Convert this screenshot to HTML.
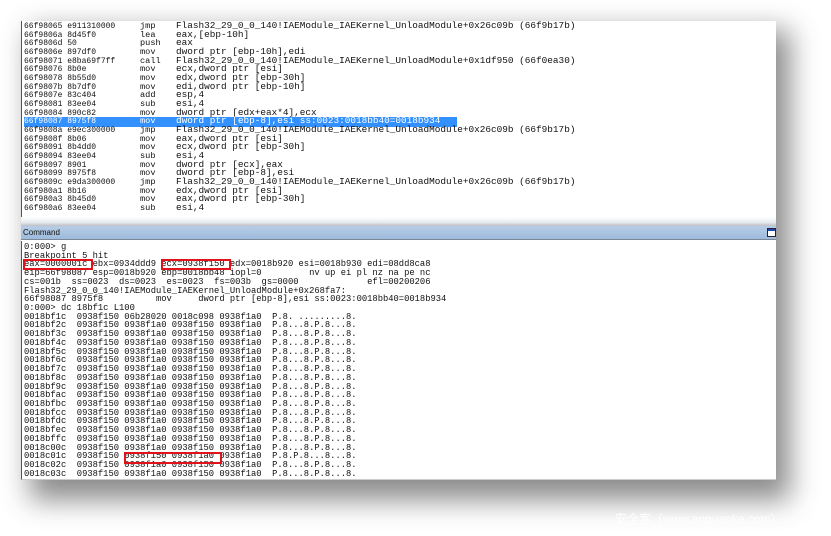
<!DOCTYPE html>
<html><head><meta charset="utf-8"><style>
html,body{margin:0;padding:0;width:831px;height:536px;overflow:hidden;background:#fff;position:relative}
.shadow{position:absolute;left:30px;top:30px;width:760px;height:470px;background:#777;filter:blur(14px);opacity:.85}
.panel{position:absolute;left:21px;top:21px;width:755px;height:459px;background:#fff}
pre{margin:0;font-family:"Liberation Mono",monospace;font-size:8.8px;color:#111;white-space:pre}
.top{position:absolute;left:0;top:0;width:755px;height:196px;border-left:1px solid #555;box-sizing:border-box;padding:1px 0 0 2px}
.r{height:8.68px;line-height:8.68px;font-family:"Liberation Mono",monospace;font-size:8.6px;color:#111;white-space:pre}
.r span{display:inline-block}
.a{width:116px;font-size:8px}
.m{width:36px}
.o{font-size:9.4px;letter-spacing:0}
.hl{background:#3390ff;color:#fff;width:433px}
.sep{position:absolute;left:0;top:196px;width:755px;height:9px;background:linear-gradient(#fff,#e6ebf0 60%,#bdbdc4)}
.bar{position:absolute;left:0;top:205px;width:755px;height:14px;background:linear-gradient(#b7cde6,#9ebbdc);border-bottom:1px solid #7a8898;font:8px "Liberation Sans",sans-serif;color:#111;line-height:14px;padding-left:2px;box-sizing:border-box}
.ico{position:absolute;right:0;top:2px;width:9px;height:9px;border:1px solid #223;background:#fff;box-sizing:border-box}
.ico:before{content:"";position:absolute;left:0;top:0;width:100%;height:2px;background:#2244aa}
.cmd{position:absolute;left:0;top:220px;width:755px;height:239px;border-left:1px solid #555;border-bottom:1px solid #ccc;box-sizing:border-box;padding:2px 0 0 2px;overflow:hidden}
.cmd pre{line-height:8.72px}
.rb{position:absolute;border:2px solid #e0131a;box-sizing:border-box}
.wm{position:absolute;left:615px;top:510px;font:12px "Liberation Sans","Noto Sans CJK SC",sans-serif;color:#fff;opacity:.9}
</style></head><body>
<div class="shadow"></div>
<div class="panel">
<div class="top">
<div class="r"><span class="a">66f98065 e911310000</span><span class="m">jmp</span><span class="o">Flash32_29_0_0_140!IAEModule_IAEKernel_UnloadModule+0x26c09b (66f9b17b)</span></div>
<div class="r"><span class="a">66f9806a 8d45f0</span><span class="m">lea</span><span class="o">eax,[ebp-10h]</span></div>
<div class="r"><span class="a">66f9806d 50</span><span class="m">push</span><span class="o">eax</span></div>
<div class="r"><span class="a">66f9806e 897df0</span><span class="m">mov</span><span class="o">dword ptr [ebp-10h],edi</span></div>
<div class="r"><span class="a">66f98071 e8ba69f7ff</span><span class="m">call</span><span class="o">Flash32_29_0_0_140!IAEModule_IAEKernel_UnloadModule+0x1df950 (66f0ea30)</span></div>
<div class="r"><span class="a">66f98076 8b0e</span><span class="m">mov</span><span class="o">ecx,dword ptr [esi]</span></div>
<div class="r"><span class="a">66f98078 8b55d0</span><span class="m">mov</span><span class="o">edx,dword ptr [ebp-30h]</span></div>
<div class="r"><span class="a">66f9807b 8b7df0</span><span class="m">mov</span><span class="o">edi,dword ptr [ebp-10h]</span></div>
<div class="r"><span class="a">66f9807e 83c404</span><span class="m">add</span><span class="o">esp,4</span></div>
<div class="r"><span class="a">66f98081 83ee04</span><span class="m">sub</span><span class="o">esi,4</span></div>
<div class="r"><span class="a">66f98084 890c82</span><span class="m">mov</span><span class="o">dword ptr [edx+eax*4],ecx</span></div>
<div class="r"><span class="hl"><span class="a">66f98087 8975f8</span><span class="m">mov</span><span class="o">dword ptr [ebp-8],esi ss:0023:0018bb40=0018b934</span></span></div>
<div class="r"><span class="a">66f9808a e9ec300000</span><span class="m">jmp</span><span class="o">Flash32_29_0_0_140!IAEModule_IAEKernel_UnloadModule+0x26c09b (66f9b17b)</span></div>
<div class="r"><span class="a">66f9808f 8b06</span><span class="m">mov</span><span class="o">eax,dword ptr [esi]</span></div>
<div class="r"><span class="a">66f98091 8b4dd0</span><span class="m">mov</span><span class="o">ecx,dword ptr [ebp-30h]</span></div>
<div class="r"><span class="a">66f98094 83ee04</span><span class="m">sub</span><span class="o">esi,4</span></div>
<div class="r"><span class="a">66f98097 8901</span><span class="m">mov</span><span class="o">dword ptr [ecx],eax</span></div>
<div class="r"><span class="a">66f98099 8975f8</span><span class="m">mov</span><span class="o">dword ptr [ebp-8],esi</span></div>
<div class="r"><span class="a">66f9809c e9da300000</span><span class="m">jmp</span><span class="o">Flash32_29_0_0_140!IAEModule_IAEKernel_UnloadModule+0x26c09b (66f9b17b)</span></div>
<div class="r"><span class="a">66f980a1 8b16</span><span class="m">mov</span><span class="o">edx,dword ptr [esi]</span></div>
<div class="r"><span class="a">66f980a3 8b45d0</span><span class="m">mov</span><span class="o">eax,dword ptr [ebp-30h]</span></div>
<div class="r"><span class="a">66f980a6 83ee04</span><span class="m">sub</span><span class="o">esi,4</span></div>
</div>
<div class="sep"></div>
<div class="bar">Command<div class="ico"></div></div>
<div class="cmd"><pre>0:000&gt; g
Breakpoint 5 hit
eax=0000001c ebx=0934ddd9 ecx=0938f150 edx=0018b920 esi=0018b930 edi=08dd8ca8
eip=66f98087 esp=0018b920 ebp=0018bb48 iopl=0         nv up ei pl nz na pe nc
cs=001b  ss=0023  ds=0023  es=0023  fs=003b  gs=0000             efl=00200206
Flash32_29_0_0_140!IAEModule_IAEKernel_UnloadModule+0x268fa7:
66f98087 8975f8          mov     dword ptr [ebp-8],esi ss:0023:0018bb40=0018b934
0:000&gt; dc 18bf1c L100
0018bf1c  0938f150 06b28020 0018c098 0938f1a0  P.8. .........8.
0018bf2c  0938f150 0938f1a0 0938f150 0938f1a0  P.8...8.P.8...8.
0018bf3c  0938f150 0938f1a0 0938f150 0938f1a0  P.8...8.P.8...8.
0018bf4c  0938f150 0938f1a0 0938f150 0938f1a0  P.8...8.P.8...8.
0018bf5c  0938f150 0938f1a0 0938f150 0938f1a0  P.8...8.P.8...8.
0018bf6c  0938f150 0938f1a0 0938f150 0938f1a0  P.8...8.P.8...8.
0018bf7c  0938f150 0938f1a0 0938f150 0938f1a0  P.8...8.P.8...8.
0018bf8c  0938f150 0938f1a0 0938f150 0938f1a0  P.8...8.P.8...8.
0018bf9c  0938f150 0938f1a0 0938f150 0938f1a0  P.8...8.P.8...8.
0018bfac  0938f150 0938f1a0 0938f150 0938f1a0  P.8...8.P.8...8.
0018bfbc  0938f150 0938f1a0 0938f150 0938f1a0  P.8...8.P.8...8.
0018bfcc  0938f150 0938f1a0 0938f150 0938f1a0  P.8...8.P.8...8.
0018bfdc  0938f150 0938f1a0 0938f150 0938f1a0  P.8...8.P.8...8.
0018bfec  0938f150 0938f1a0 0938f150 0938f1a0  P.8...8.P.8...8.
0018bffc  0938f150 0938f1a0 0938f150 0938f1a0  P.8...8.P.8...8.
0018c00c  0938f150 0938f1a0 0938f150 0938f1a0  P.8...8.P.8...8.
0018c01c  0938f150 0938f150 0938f1a0 0938f1a0  P.8.P.8...8...8.
0018c02c  0938f150 0938f1a0 0938f150 0938f1a0  P.8...8.P.8...8.
0018c03c  0938f150 0938f1a0 0938f150 0938f1a0  P.8...8.P.8...8.</pre></div>
</div>
<div class="rb" style="left:23px;top:259px;width:70px;height:11px"></div>
<div class="rb" style="left:161px;top:259px;width:70px;height:11px"></div>
<div class="rb" style="left:124px;top:452px;width:98px;height:12px"></div>
<div class="wm">安全客（www.anquanke.com）</div>
</body></html>
